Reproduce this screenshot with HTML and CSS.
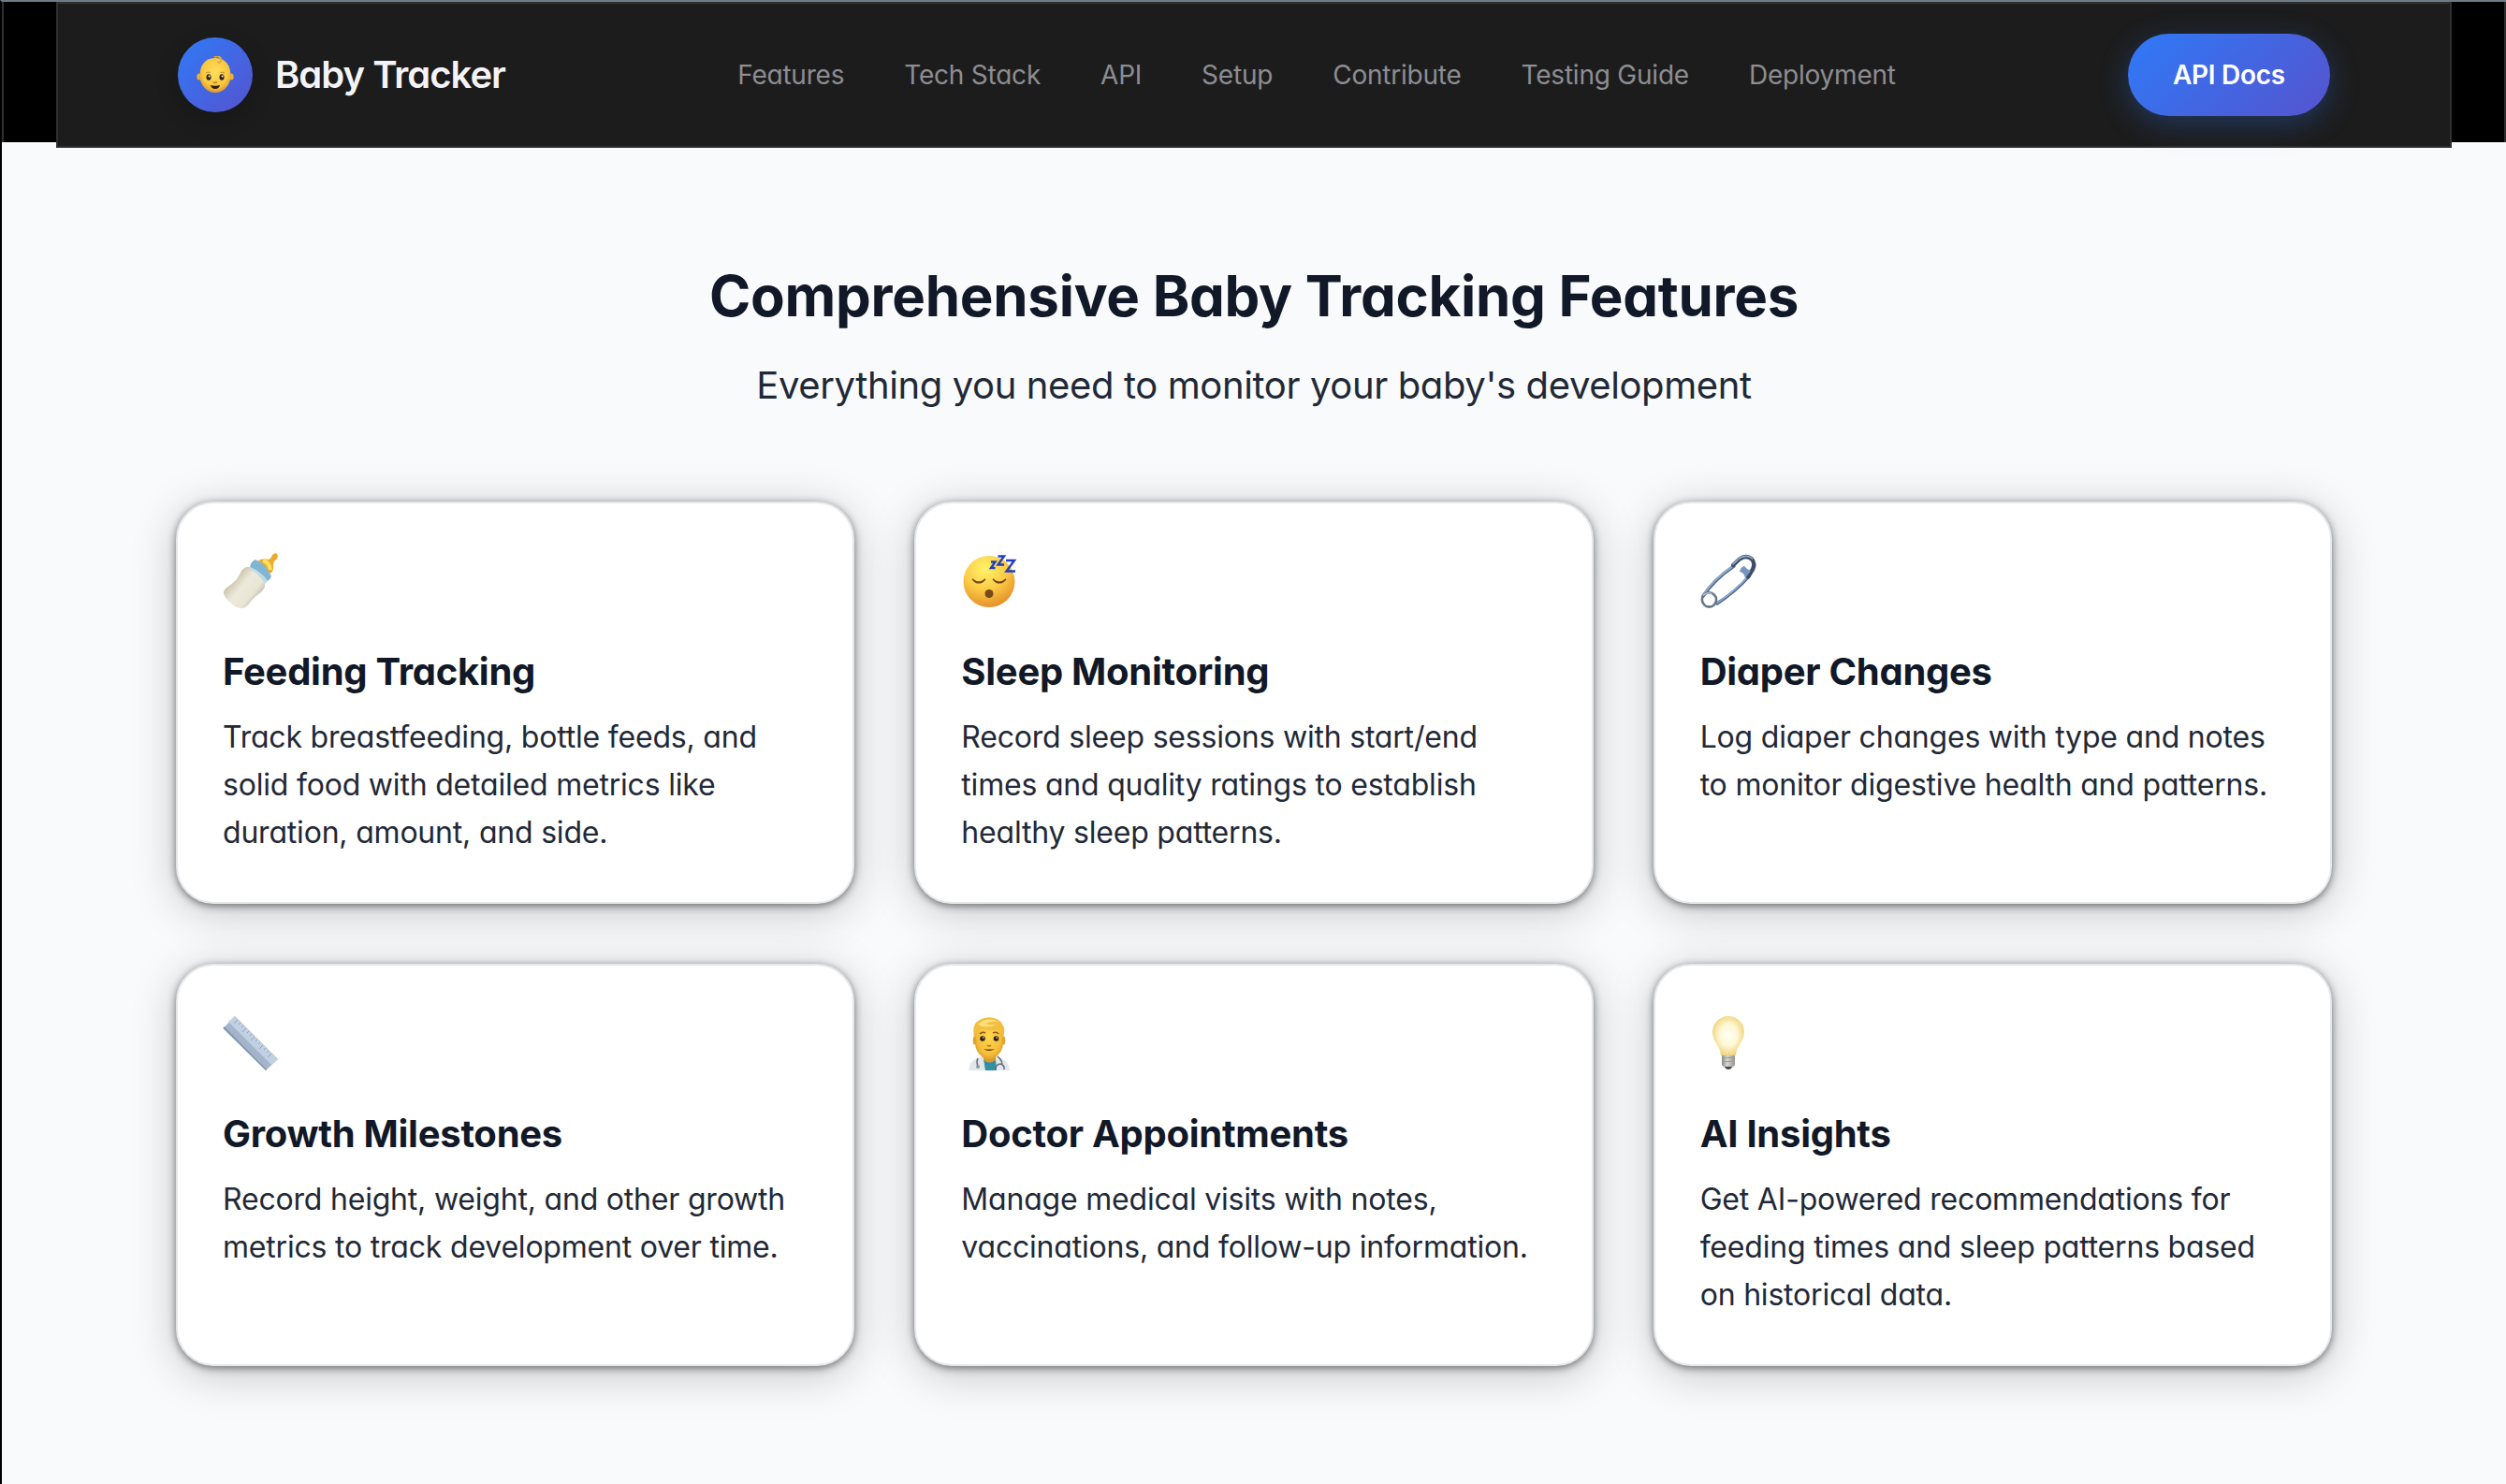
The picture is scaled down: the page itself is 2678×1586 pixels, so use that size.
FILE: index.html
```html
<!DOCTYPE html>
<html lang="en">
<head>
<meta charset="utf-8">
<title>Baby Tracker</title>
<link rel="stylesheet" href="styles.css">
</head>
<body>
<div class="page">
  <div class="backdrop">
    <header class="header">
      <div class="brand">
        <span class="logo">
          <svg width="40" height="40" viewBox="0 0 40 40">
            <defs><radialGradient id="face" cx=".5" cy=".4" r=".6"><stop offset="0" stop-color="#ffdc5c"/><stop offset=".7" stop-color="#f8c840"/><stop offset="1" stop-color="#dc9a34"/></radialGradient></defs>
            <ellipse cx="2.600" cy="22" rx="2.300" ry="3.600" fill="#e9ae38"/><ellipse cx="37.400" cy="22" rx="2.300" ry="3.600" fill="#e9ae38"/>
            <path d="M20 2C8 2 3.500 11 3.500 21c0 10 7.500 18 16.500 18s16.500-8 16.500-18C36.500 11 32 2 20 2z" fill="url(#face)"/>
            <path d="M19 1c5-2 8 1 7 4-.5 2.500-3 2-3 1" fill="none" stroke="#e0a83a" stroke-width="2"/>
            <path d="M10 18q2-1.500 4.500-.5M25.500 17.500q2.500-1 4.500.5" fill="none" stroke="#c28a28"/>
            <ellipse cx="13" cy="22.500" rx="2.500" ry="3.300" fill="#332316"/><ellipse cx="27" cy="22.500" rx="2.500" ry="3.300" fill="#332316"/>
            <circle cx="13.600" cy="21.500" r="1" fill="#fff"/><circle cx="27.600" cy="21.500" r="1" fill="#fff"/>
            <path d="M18 27.500q2 2 4 0" fill="none" stroke="#bd7a22" stroke-width="1.500"/><path d="M15 31q5 1.500 10 0-1 4-5 4t-5-4z" fill="#3b1b10"/>
          </svg>
        </span>
        <span class="brand-name">Baby Tracker</span>
      </div>
      <nav class="nav">
        <a>Features</a><a>Tech Stack</a><a>API</a><a>Setup</a><a>Contribute</a><a>Testing Guide</a><a>Deployment</a>
      </nav>
      <a class="button">API Docs</a>
    </header>
  </div>
  <main class="features">
    <h1 class="heading">Comprehensive Baby Tracking Features</h1>
    <p class="lead">Everything you need to monitor your baby's development</p>
    <div class="grid">
      <article class="card">
        <svg class="icon" viewBox="0 0 60 60">
          <defs><linearGradient id="milk" x1=".15" y1=".3" x2=".8" y2=".85"><stop offset="0" stop-color="#c4bba2"/><stop offset=".4" stop-color="#eeeadb"/><stop offset=".75" stop-color="#e9e6d6"/><stop offset="1" stop-color="#bcb5a0"/></linearGradient></defs>
          <path d="M49 7q3-1 4-5 3-3 5-1 2 3-1 6-3 2-3 5 1 7-3 10L38 8q5-3 11-1z" fill="#f0a92b"/>
          <path d="M43 8q7 2 8 10" fill="none" stroke="#ffe263" stroke-width="4"/>
          <path d="M22 17q3-3 7-2l13 12q4 4 3 9-2 5-7 8-5 4-9 9-4 6-9 6-6 0-12-6-6-5-7-10 0-5 6-8 8-5 12-14 1-3 3-4z" fill="url(#milk)"/>
          <path d="M29 15q1-6 6-8 11 4 17 18-1 3-4 5-7-9-19-15z" fill="#82b5d0"/>
          <path d="M29 15q13 5 19 15l-3 3Q38 21 28 17z" fill="#bfdbe6"/>
        </svg>
        <h2>Feeding Tracking</h2>
        <p>Track breastfeeding, bottle feeds, and<br>solid food with detailed metrics like<br>duration, amount, and side.</p>
      </article>
      <article class="card">
        <svg class="icon" viewBox="0 0 60 60">
          <defs><radialGradient id="sleep" cx=".42" cy=".25" r=".75"><stop offset="0" stop-color="#fff36a"/><stop offset=".55" stop-color="#fbcb45"/><stop offset="1" stop-color="#e5912b"/></radialGradient></defs>
          <circle cx="30" cy="30.500" r="27.500" fill="url(#sleep)"/>
          <path d="M12 28q7 6 14 0-7 8-14 0zM34 28q7 6 14 0-7 8-14 0z" fill="#744515" stroke="#744515" stroke-width="1.200"/>
          <circle cx="30" cy="43.500" r="4.500" fill="#78491a"/>
          <path d="M32 9.500h4.500l-4.500 6.500h4.500M39.500 3.500h6.500L39.500 12.500H46M48 8h9l-8.500 11.500H58" fill="none" stroke="#203fc2" stroke-width="2.400"/>
        </svg>
        <h2>Sleep Monitoring</h2>
        <p>Record sleep sessions with start/end<br>times and quality ratings to establish<br>healthy sleep patterns.</p>
      </article>
      <article class="card">
        <svg class="icon" viewBox="0 0 60 60">
          <g fill="none" stroke-linecap="round" stroke-linejoin="round">
          <path d="M36 14Q15 28 3 46M18 54Q38 41 52 25" stroke="#50698f" stroke-width="3.400"/>
          <path d="M36 13.500Q15 27 3 45M18 53.500Q38 40 51.500 24.500" stroke="#94afd5" stroke-width="1.500"/>
          <path d="M35 13 42 6.500q7-5 13 0 4 5 1 11l-5 8" stroke="#3e4d66" stroke-width="4.400"/><path d="M35 12 42 5.500q8-4.500 13.500.5" stroke="#94add1" stroke-width="1.600"/>
          <circle cx="9.500" cy="50" r="7.600" stroke="#697686" stroke-width="2.600"/><path d="M3.500 45q4-4 9-1" stroke="#b7c2d2" stroke-width="1.400"/></g>
          <path d="M42 20q1-5 5-6 3 4 7 5l-6 8q-1-6-6-7z" fill="#7895bf"/>
        </svg>
        <h2>Diaper Changes</h2>
        <p>Log diaper changes with type and notes<br>to monitor digestive health and patterns.</p>
      </article>
      <article class="card">
        <svg class="icon" viewBox="0 0 60 60">
          <path d="M13 1 59 47 46 59 .5 14z" fill="#a3b4cb"/><path d="M13 1 59 47l-7 6L6 7z" fill="#c2d0e3"/><path d="M.5 14 46 59l1-1L1.500 12z" fill="#8395ae"/>
          <path d="m16 5-4 4m7-1-2 2m5 1-2 2m5 1-4 4m7-1-2 2m5 1-2 2m5 1-4 4m7-1-2 2m5 1-2 2m5 1-4 4m7-1-2 2m5 1-2 2m5 1-4 4" stroke="#91a3bd"/>
        </svg>
        <h2>Growth Milestones</h2>
        <p>Record height, weight, and other growth<br>metrics to track development over time.</p>
      </article>
      <article class="card">
        <svg class="icon" viewBox="0 0 60 60">
          <defs><radialGradient id="doc" cx=".5" cy=".45" r=".6"><stop offset="0" stop-color="#ffd750"/><stop offset=".7" stop-color="#f4bf39"/><stop offset="1" stop-color="#d99427"/></radialGradient></defs>
          <path d="M8 59q1-10 9-13l8-3h10l8 3q8 3 9 13z" fill="#e3e7eb"/><path d="M24 47h13l1 12H26z" fill="#348fa6"/><path d="M24 40h13v8q-7 5-13 0z" fill="#d99a2c"/>
          <path d="M15 16q0-13 15-13t15 13v14q0 8-8 15-7 5-14 0-8-7-8-15z" fill="url(#doc)"/>
          <ellipse cx="14.500" cy="27" rx="1.800" ry="4.500" fill="#e2a231"/><ellipse cx="45.500" cy="27" rx="1.800" ry="4.500" fill="#e2a231"/>
          <path d="M14 24Q11 9 20 5q11-6 21 1 8 6 4 18-1-7-4-9-11 3-20-2-4 3-7 11z" fill="#f2bd42"/><path d="M18 10q10-9 22-3-8-1-14 2 6 2 12 1-10 5-20 0z" fill="#ffe17a"/>
          <path d="M20 20q3-3 6-1M34 19q4-2 6 1" fill="none" stroke="#8b5a19" stroke-width="1.600"/>
          <circle cx="23" cy="25" r="2.800" fill="#2c211b"/><circle cx="37.500" cy="25" r="2.800" fill="#2c211b"/><circle cx="23.800" cy="24" r=".8" fill="#fff"/><circle cx="38.300" cy="24" r=".8" fill="#fff"/>
          <path d="M28 32q2 2 4 0" fill="none" stroke="#b8791f" stroke-width="1.600"/><path d="M24 36q6 1 12 0-6 4-12 0z" fill="#572c14"/>
          <path d="M18 46q-2 4 0 8M39 44q5 4 5 9m-7 5v-3q5-6 9 0v3" fill="none" stroke="#606c79" stroke-width="1.500"/><circle cx="18" cy="55" r="2" fill="#8d98a3"/>
        </svg>
        <h2>Doctor Appointments</h2>
        <p>Manage medical visits with notes,<br>vaccinations, and follow-up information.</p>
      </article>
      <article class="card">
        <svg class="icon" viewBox="0 0 60 60">
          <defs><radialGradient id="bulb" cx=".5" cy=".48" r=".56"><stop offset="0" stop-color="#fffff8"/><stop offset=".5" stop-color="#fff8d4"/><stop offset="1" stop-color="#efcf72"/></radialGradient><linearGradient id="base"><stop offset="0" stop-color="#8a8882"/><stop offset=".4" stop-color="#d8d6d2"/><stop offset="1" stop-color="#98938c"/></linearGradient></defs>
          <path d="M30 1c10 0 17 8 17 17 0 10-8 14-9 25H22c-1-11-9-15-9-25C13 9 20 1 30 1z" fill="url(#bulb)"/>
          <path d="M23 43h14v10q-2 3-4 3h-6q-2 0-4-3z" fill="url(#base)"/><path d="M26 55h8q-1 3-4 3t-4-3z" fill="#46484c"/><path d="M23 46l14-1M23 50l14-1" stroke="#9d9a95"/>
        </svg>
        <h2>AI Insights</h2>
        <p>Get AI-powered recommendations for<br>feeding times and sleep patterns based<br>on historical data.</p>
      </article>
    </div>
  </main>
</div>
</body>
</html>
```
FILE: styles.css
```css
* { box-sizing: border-box; }
body {
  margin: 0;
  font-family: Inter, "Liberation Sans", sans-serif;
  font-feature-settings: "cv11";
  background: #f9fafc;
  color: #1f2937;
}
.page {
  min-height: 1586px;
  border-left: 2px solid #000;
  border-top: 2px solid #6f7b85;
}
.backdrop {
  height: 150px;
  padding: 0 56px;
  background: #000;
  border-left: 2px solid #2e2e2e;
  border-right: 2px solid #2e2e2e;
}
.header {
  width: 2560px;
  height: 156px;
  padding: 0 128px;
  display: flex;
  justify-content: space-between;
  align-items: center;
  background: #1c1c1c;
  border: 2px solid #303030;
}
.brand { display: flex; align-items: center; gap: 24px; }
.logo {
  width: 80px;
  height: 80px;
  display: flex;
  align-items: center;
  justify-content: center;
  border-radius: 50%;
  background: linear-gradient(135deg, #2f7af7, #5653ce);
  box-shadow: 0 8px 24px rgba(0, 0, 0, .2);
}
.brand-name { margin-top: -2px; font-size: 40px; font-weight: 600; letter-spacing: -1px; color: #f4f4f8; }
.nav { display: flex; gap: 64px; font-size: 28px; letter-spacing: -.22px; color: #8d8d92; white-space: nowrap; }
.button {
  width: 216px;
  height: 88px;
  border-radius: 44px;
  display: flex;
  align-items: center;
  justify-content: center;
  background: linear-gradient(135deg, #2f7af7, #5653ce);
  box-shadow: 0 8px 32px rgba(47, 122, 247, .3);
  color: #fff;
  font-size: 28px;
  font-weight: 600;
  letter-spacing: -.28px;
}
.features { padding: 120px 186px 0; text-align: center; }
.heading { margin: 0; font-size: 60px; line-height: 88px; font-weight: 700; letter-spacing: -.28px; color: #111827; white-space: nowrap; }
.lead { margin: 20px 0 0; font-size: 40px; line-height: 64px; letter-spacing: -.38px; }
.grid {
  margin-top: 92px;
  display: grid;
  grid-template-columns: repeat(3, 1fr);
  grid-auto-rows: 430px;
  gap: 64px;
  text-align: left;
}
.card {
  padding: 53px 48px 0;
  background: #fff;
  border: 2px solid #e5e7eb;
  border-radius: 40px;
  box-shadow: 0 2px 8px rgba(0, 0, 0, .5), 0 8px 48px rgba(0, 0, 0, .22);
  white-space: nowrap;
}
.icon { display: block; width: 60px; height: 60px; overflow: visible; }
.card h2 { margin: 35px 0 0; font-size: 40px; line-height: 64px; font-weight: 700; letter-spacing: -.27px; color: #111827; }
.card p { margin: 12px 0 0; font-size: 32px; line-height: 51.2px; letter-spacing: -.2px; }
```
